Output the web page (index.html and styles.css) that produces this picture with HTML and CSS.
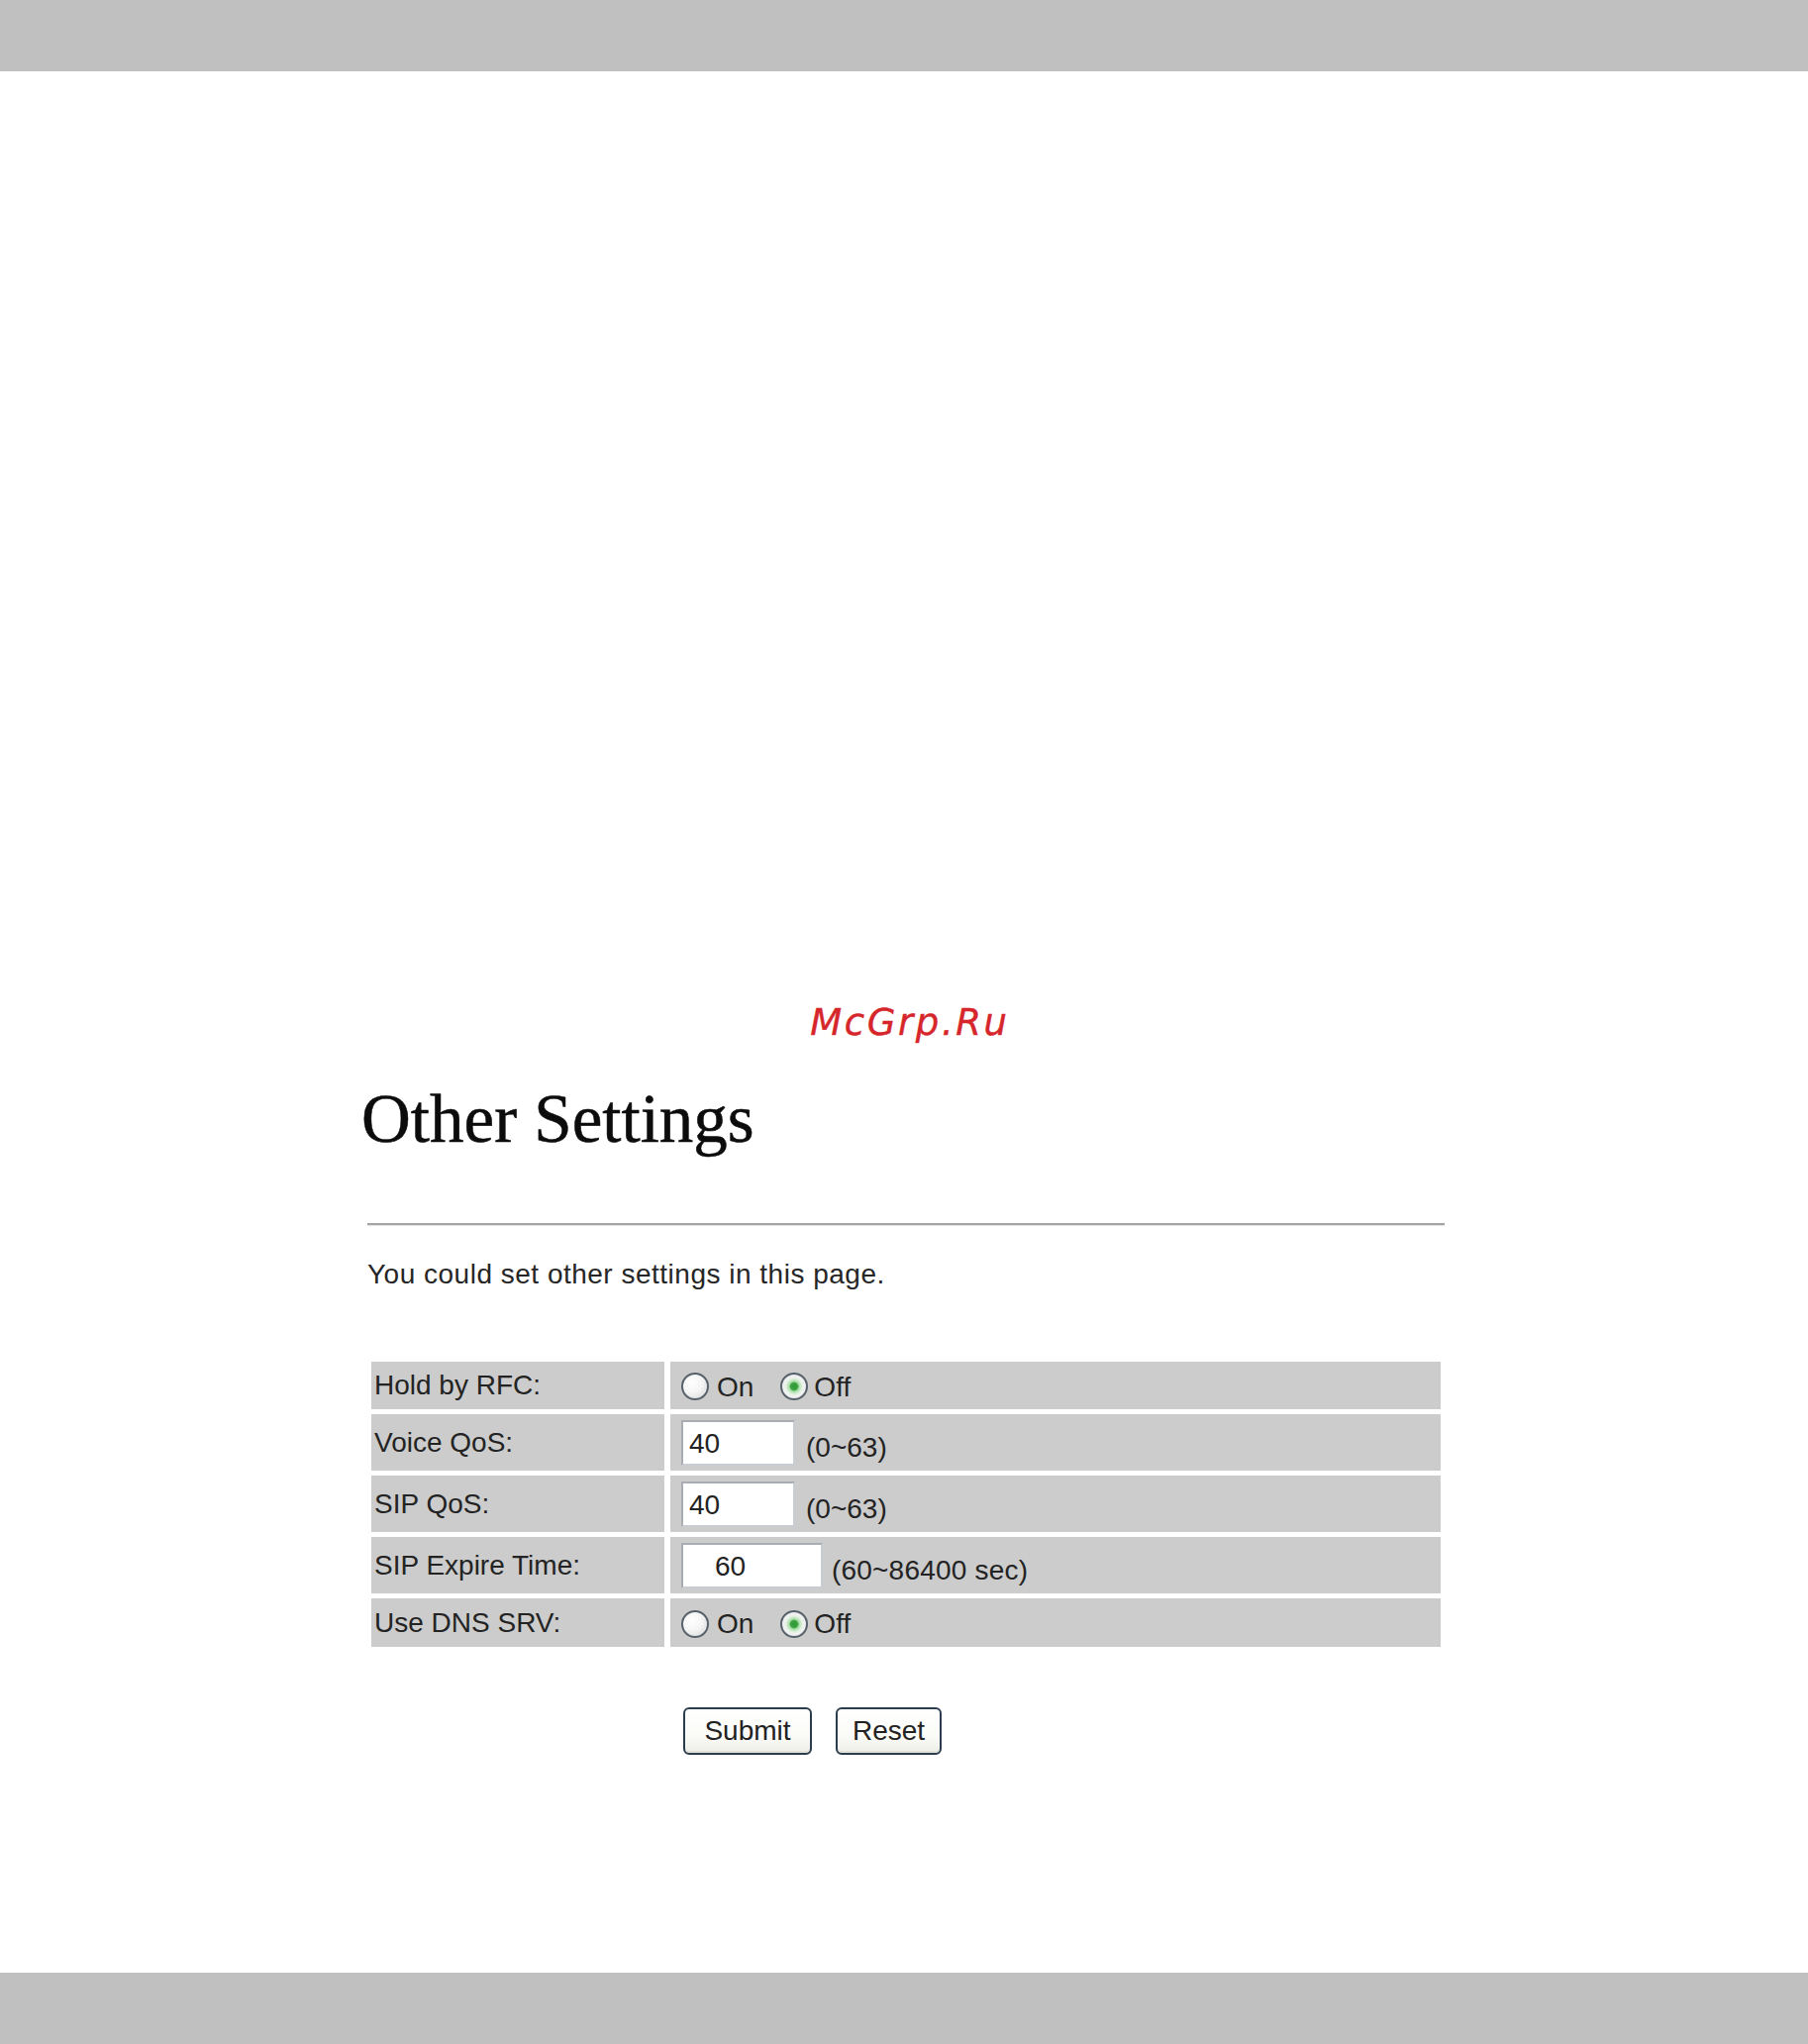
FILE: index.html
```html
<!DOCTYPE html>
<html lang="en">
<head>
<meta charset="utf-8">
<title>Other Settings</title>
<link rel="stylesheet" href="styles.css">
</head>
<body>
<div class="frame">
  <header class="topbar"></header>
  <main class="page">
    <div class="watermark">McGrp.Ru</div>
    <div class="content">
      <h1 class="title">Other Settings</h1>
      <hr class="rule">
      <p class="intro">You could set other settings in this page.</p>
      <form class="form">
        <table class="settings">
          <tr class="row row-short">
            <td class="label">Hold by RFC:</td>
            <td class="value">
              <div class="field">
                <label class="opt"><input type="radio" class="radio" name="hold"><span class="opt-text">On</span></label>
                <label class="opt"><input type="radio" class="radio" name="hold" checked><span class="opt-text">Off</span></label>
              </div>
            </td>
          </tr>
          <tr class="row">
            <td class="label">Voice QoS:</td>
            <td class="value">
              <div class="field">
                <input type="text" class="text-input" value="40">
                <span class="hint">(0~63)</span>
              </div>
            </td>
          </tr>
          <tr class="row">
            <td class="label">SIP QoS:</td>
            <td class="value">
              <div class="field">
                <input type="text" class="text-input" value="40">
                <span class="hint">(0~63)</span>
              </div>
            </td>
          </tr>
          <tr class="row">
            <td class="label">SIP Expire Time:</td>
            <td class="value">
              <div class="field">
                <input type="text" class="text-input text-input-wide" value="60">
                <span class="hint">(60~86400 sec)</span>
              </div>
            </td>
          </tr>
          <tr class="row row-short row-last">
            <td class="label">Use DNS SRV:</td>
            <td class="value">
              <div class="field">
                <label class="opt"><input type="radio" class="radio" name="dns"><span class="opt-text">On</span></label>
                <label class="opt"><input type="radio" class="radio" name="dns" checked><span class="opt-text">Off</span></label>
              </div>
            </td>
          </tr>
        </table>
        <div class="actions">
          <button type="submit" class="btn btn-submit">Submit</button>
          <button type="reset" class="btn btn-reset">Reset</button>
        </div>
      </form>
    </div>
  </main>
  <footer class="bottombar"></footer>
</div>
</body>
</html>
```

FILE: styles.css
```css
html, body {
  margin: 0;
  padding: 0;
  background: #ffffff;
}

.frame {
  display: flex;
  flex-direction: column;
  height: 2064px;
  overflow: hidden;
}

.topbar,
.bottombar {
  height: 72px;
  flex: 0 0 72px;
  background: #c0c0c0;
}

.page {
  flex: 1 1 auto;
  padding-top: 939px;
}

.watermark {
  font-family: "DejaVu Sans", sans-serif;
  font-style: italic;
  font-size: 37px;
  line-height: 44px;
  letter-spacing: 2.6px;
  color: #d6262b;
  text-align: center;
  padding-left: 12px;
  -webkit-text-stroke: 0.4px #d6262b;
}

.content {
  margin-left: 369px;
  width: 1092px;
}

.title {
  margin: 35px 0 0 -4px;
  font-family: "Liberation Serif", "Times New Roman", serif;
  font-weight: normal;
  font-size: 69px;
  line-height: 80px;
  color: #0c0c0c;
  -webkit-text-stroke: 0.5px #0c0c0c;
}

.rule {
  margin: 65px 2px 0 2px;
  height: 2px;
  border: none;
  background: #a4a4a4;
  box-shadow: 0 1px 0 #e2e2e2;
}

.intro {
  margin: 34px 0 0 2px;
  font-family: "Liberation Sans", Arial, sans-serif;
  font-size: 28px;
  line-height: 32px;
  letter-spacing: 0.5px;
  color: #262626;
}

.form {
  margin: 67px 0 0 0;
}

.settings {
  border-collapse: separate;
  border-spacing: 6px 5px;
  width: 1092px;
  font-family: "Liberation Sans", Arial, sans-serif;
  font-size: 28px;
  color: #232323;
}

.settings td {
  background: #cccccc;
  padding: 0;
  vertical-align: middle;
}

.row td {
  height: 57px;
}

.row-short td {
  height: 48px;
}

.row-last td {
  height: 49px;
}

.label {
  width: 293px;
  padding-left: 3px !important;
}

.value {
  padding-left: 11px !important;
}

.field {
  display: flex;
  align-items: center;
}

.opt {
  display: flex;
  align-items: center;
  margin-right: 27px;
}

.opt:last-child {
  margin-right: 0;
}

.opt-text {
  margin-left: 8px;
  padding-top: 3px;
}

.opt:last-child .opt-text {
  margin-left: 6px;
}

.radio {
  appearance: none;
  -webkit-appearance: none;
  margin: 0;
  width: 28px;
  height: 28px;
  box-sizing: border-box;
  border-radius: 50%;
  border: 2px solid #58626c;
  background: radial-gradient(circle at 38% 35%, #ffffff 0%, #f5f5f5 45%, #d4d4d4 100%);
  margin-top: 2px;
}

.radio:checked {
  background: radial-gradient(circle at 50% 50%, #2f9a35 0, #3aa43f 3.5px, #a7dca8 5px, #dff2df 8px, #f2f2f2 10px, #d6d6d6 100%);
}

.text-input {
  box-sizing: border-box;
  width: 115px;
  height: 46px;
  margin: 0;
  padding: 2px 0 0 6px;
  border: 2px solid #a9adb2;
  border-right-color: #c9cdd1;
  border-bottom-color: #c9cdd1;
  background: #ffffff;
  font-family: "Liberation Sans", Arial, sans-serif;
  font-size: 28px;
  color: #222222;
  outline: none;
}

.text-input-wide {
  width: 143px;
  padding-left: 32px;
}

.hint {
  margin-left: 11px;
  padding-top: 10px;
}

.text-input-wide + .hint {
  margin-left: 9px;
  letter-spacing: 0.2px;
}

.actions {
  display: flex;
  gap: 24px;
  margin: 56px 0 0 321px;
}

.btn {
  box-sizing: border-box;
  height: 48px;
  margin: 0;
  padding: 0;
  border: 2px solid #2b3d4f;
  border-radius: 6px;
  background: linear-gradient(#ffffff 0%, #fbfbf8 60%, #eeeee8 100%);
  box-shadow: inset 0 -2px 0 #e2e2da;
  font-family: "Liberation Sans", Arial, sans-serif;
  font-size: 28px;
  color: #222222;
}

.btn-submit {
  width: 130px;
}

.btn-reset {
  width: 107px;
}
```
